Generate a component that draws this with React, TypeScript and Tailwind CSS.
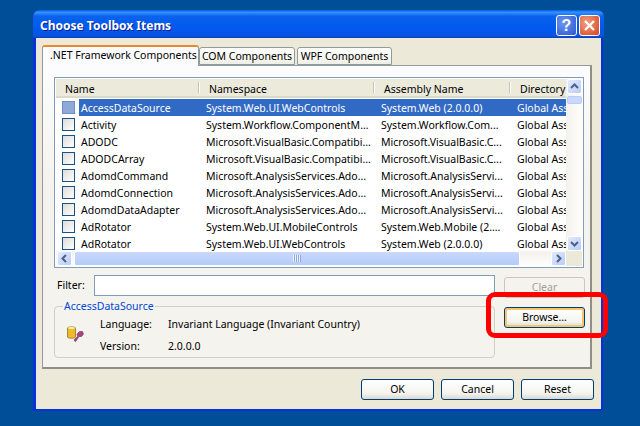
const rows = [
  ["AccessDataSource", "System.Web.UI.WebControls", "System.Web (2.0.0.0)"],
  ["Activity", "System.Workflow.ComponentM...", "System.Workflow.Com..."],
  ["ADODC", "Microsoft.VisualBasic.Compatibi...", "Microsoft.VisualBasic.C..."],
  ["ADODCArray", "Microsoft.VisualBasic.Compatibi...", "Microsoft.VisualBasic.C..."],
  ["AdomdCommand", "Microsoft.AnalysisServices.Ado...", "Microsoft.AnalysisServi..."],
  ["AdomdConnection", "Microsoft.AnalysisServices.Ado...", "Microsoft.AnalysisServi..."],
  ["AdomdDataAdapter", "Microsoft.AnalysisServices.Ado...", "Microsoft.AnalysisServi..."],
  ["AdRotator", "System.Web.UI.MobileControls", "System.Web.Mobile (2...."],
  ["AdRotator", "System.Web.UI.WebControls", "System.Web (2.0.0.0)"],
];

const xpButton =
  "flex items-center justify-center w-[73px] h-[21px] rounded-[3px] border border-[#003c74] bg-[linear-gradient(180deg,#ffffff,#f4f4f0_70%,#dcd8cf)] text-black";

function Arrow({ d }: { d: string }) {
  return (
    <div className="flex items-center justify-center w-[15px] h-[15px] rounded-[2px] border border-white bg-[linear-gradient(135deg,#e1eafe,#b9ccf8)]">
      <svg width="9" height="9" viewBox="0 0 9 9" fill="none" stroke="#4d6185" strokeWidth="2">
        <path d={d} />
      </svg>
    </div>
  );
}

function Header({ label, divider }: { label: string; divider?: boolean }) {
  return (
    <div className="relative pl-[9px] pt-[3px] flex items-center h-full overflow-hidden whitespace-nowrap">
      {label}
      {divider && <div className="absolute right-0 top-[3px] bottom-[3px] w-[2px] border-l border-[#c7c5b2] bg-white" />}
    </div>
  );
}

export default function App() {
  return (
    <div className="w-[640px] h-[426px] bg-[#004e98] pt-[10px] pl-[33px] overflow-hidden relative text-[10.5px] leading-[15px] text-black font-['Noto_Sans',sans-serif]">
      <div className="w-[570px] h-[401px] rounded-t-[7px] bg-[#0a4fe0] border-l-[3px] border-r-[2px] border-b-[2px] border-[#0831d9] flex flex-col">
        {/* title bar */}
        <div className="h-[28px] shrink-0 -mx-[3px] pl-[7px] pr-[4px] pt-[2px] rounded-t-[7px] flex items-center justify-between bg-[linear-gradient(180deg,#0058ee,#3593ff_8%,#0a62ee_22%,#0058ee_70%,#0a55e0_92%,#0a3fc0)]">
          <span className="font-bold text-[12px] text-white [text-shadow:1px_1px_#0f1c8c]">Choose Toolbox Items</span>
          <div className="flex gap-[2px]">
            <div className="w-[21px] h-[21px] rounded-[3px] border border-white bg-[radial-gradient(circle_at_35%_35%,#6d96f0,#2a57d0)] flex items-center justify-center text-white font-bold text-[16px] font-['Liberation_Sans',sans-serif]">?</div>
            <div className="w-[21px] h-[21px] rounded-[3px] border border-white bg-[radial-gradient(circle_at_35%_35%,#f0a080,#d8431c)] flex items-center justify-center">
              <svg width="13" height="13" viewBox="0 0 13 13" stroke="white" strokeWidth="2.4">
                <path d="M2 2L11 11M11 2L2 11" />
              </svg>
            </div>
          </div>
        </div>

        {/* dialog body */}
        <div className="flex-1 bg-[#ece9d8] pt-[7px] pl-[6px] pr-[9px]">
          {/* tabs */}
          <div className="flex items-end h-[20px] relative z-10">
            <div className="w-[157px] h-[21px] -mb-[1px] rounded-t-[3px] border border-b-0 border-[#919b9c] border-t-[#e68b2c] border-t-2 bg-[#fcfcfe] pl-[7px] pt-[1px] whitespace-nowrap">.NET Framework Components</div>
            <div className="w-[96px] h-[18px] rounded-t-[3px] border border-[#919b9c] bg-[linear-gradient(180deg,#fff,#f0efe6)] flex items-center justify-center whitespace-nowrap">COM Components</div>
            <div className="w-[95px] h-[18px] ml-[2px] rounded-t-[3px] border border-[#919b9c] bg-[linear-gradient(180deg,#fff,#f0efe6)] flex items-center justify-center whitespace-nowrap">WPF Components</div>
          </div>

          {/* tab page */}
          <div className="w-[550px] h-[304px] border border-[#919b9c] border-r-[#8f8f88] border-b-[#8f8f88] border-b-2 border-r-2 bg-[linear-gradient(180deg,#fcfcfe,#f4f3ee_40%)] pt-[11px] pl-[11px] pr-[7px]">
            {/* component list */}
            <div className="w-[530px] h-[191px] border border-[#7f9db9] bg-white p-[1px] flex">
              <div className="w-[510px] flex flex-col">
                <div className="grid grid-cols-[144px_175px_136px_55px] h-[19px] shrink-0 bg-[#ebeadb] border-b-[2px] border-[#dcd9c8] overflow-hidden">
                  <Header label="Name" divider />
                  <Header label="Namespace" divider />
                  <Header label="Assembly Name" divider />
                  <Header label="Directory" />
                </div>
                <div className="pt-[1px] flex-1 overflow-hidden">
                  {rows.map((row, i) => (
                    <div key={i} className="grid grid-cols-[144px_175px_136px_55px] h-[17px] items-center whitespace-nowrap overflow-hidden">
                      <div className="flex items-center pl-[6px]">
                        <div className={"w-[13px] h-[13px] mr-[4px] shrink-0 border border-[#1c5180] " + (i === 0 ? "bg-[#8fa9d8] border-[#6f8fc4]" : "bg-[linear-gradient(135deg,#dcdcd7,#ffffff)]")} />
                        <span className={"pl-[2px] pr-[2px] w-[121px] h-[17px] leading-[18px] " + (i === 0 ? "bg-[#316ac5] text-white" : "")}>{row[0]}</span>
                      </div>
                      <div className={"pl-[6px] h-[17px] leading-[18px] overflow-hidden " + (i === 0 ? "bg-[#316ac5] text-white" : "")}>{row[1]}</div>
                      <div className={"pl-[6px] h-[17px] leading-[18px] overflow-hidden " + (i === 0 ? "bg-[#316ac5] text-white" : "")}>{row[2]}</div>
                      <div className={"pl-[6px] h-[17px] leading-[18px] overflow-hidden " + (i === 0 ? "bg-[#316ac5] text-white" : "")}>Global Assembly</div>
                    </div>
                  ))}
                </div>
                {/* horizontal scrollbar */}
                <div className="h-[15px] shrink-0 flex items-center pl-[1px] bg-[linear-gradient(180deg,#f3f1ec,#fefefb)]">
                  <Arrow d="M6 1L2.5 4.5L6 8" />
                  <div className="ml-[2px] w-[446px] h-[15px] rounded-[2px] border border-white bg-[linear-gradient(180deg,#c9d8fc,#b6cbf8)] flex items-center justify-center">
                    <div className="w-[8px] h-[7px] bg-[repeating-linear-gradient(90deg,#eef3fe_0_1px,#8ca8e6_1px_2px)]" />
                  </div>
                  <div className="flex-1" />
                  <Arrow d="M3 1L6.5 4.5L3 8" />
                </div>
              </div>
              {/* vertical scrollbar */}
              <div className="flex-1 flex flex-col">
                <div className="h-[172px] flex flex-col items-center bg-[linear-gradient(90deg,#f3f1ec,#fefefb)]">
                  <Arrow d="M1 6L4.5 2.5L8 6" />
                  <div className="w-[15px] h-[8px] mt-[2px] rounded-[2px] border border-[#b9ccf8] bg-[#c9d8fc]" />
                  <div className="flex-1" />
                  <Arrow d="M1 3L4.5 6.5L8 3" />
                </div>
                <div className="flex-1 bg-[#ece9d8]" />
              </div>
            </div>

            {/* filter row */}
            <div className="flex items-start mt-[7px] gap-[9px]">
              <div className="w-[441px] flex flex-col">
                <div className="flex items-center h-[21px]">
                  <span className="pl-[3px] w-[40px]">Filter:</span>
                  <div className="w-[401px] h-[21px] border border-[#7f9db9] bg-white" />
                </div>
                {/* details group */}
                <fieldset className="mt-[4px] h-[58px] border border-[#d0d0bf] rounded-[4px] pl-[12px]">
                  <legend className="ml-[-4px] px-[1px] text-[#0046d5] leading-[13px]">AccessDataSource</legend>
                  <div className="flex items-center pt-[4px]">
                    <svg width="17" height="16" viewBox="0 0 17 16" className="shrink-0 mb-[3px]">
                      <path d="M0.5 2C0.5 0.6 8.5 0.6 8.5 2V11C8.5 12.6 0.5 12.6 0.5 11Z" fill="#efb92a" stroke="#9c8a3c" />
                      <ellipse cx="4.5" cy="2" rx="3.5" ry="1.1" fill="#fbeea4" />
                      <path d="M8 15.5L7 14L10.5 10.5L10 8L12.5 5.5L15.5 5.5L16.5 8L14.5 10.5L12 10.5L9 15Z" fill="#a5467f" stroke="#7d2b5e" strokeWidth="0.6" />
                    </svg>
                    <div className="ml-[16px] grid grid-cols-[68px_auto] gap-y-[7px]">
                      <span>Language:</span>
                      <span>Invariant Language (Invariant Country)</span>
                      <span>Version:</span>
                      <span>2.0.0.0</span>
                    </div>
                  </div>
                </fieldset>
              </div>
              <div className="flex flex-col gap-[9px] mt-[2px]">
                <div className="flex items-center justify-center w-[81px] h-[21px] rounded-[3px] border border-[#c9c7ba] bg-[#f4f3ee] text-[#a1a192]">Clear</div>
                <div className="flex items-center justify-center w-[81px] h-[21px] rounded-[3px] border border-[#003c74] bg-[linear-gradient(180deg,#fff,#f4f4f0_70%,#dcd8cf)] shadow-[inset_0_0_0_2px_#f8c66a]">Browse...</div>
              </div>
            </div>
          </div>

          {/* dialog buttons */}
          <div className="flex mt-[10px] pl-[319px] gap-[7px] w-[560px]">
            <div className={xpButton}>OK</div>
            <div className={xpButton}>Cancel</div>
            <div className={xpButton}>Reset</div>
          </div>
        </div>
      </div>

      {/* red highlight drawn over the screenshot */}
      <div className="absolute left-[486px] top-[292px] w-[122px] h-[46px] rounded-[9px] border-[5px] border-[#ff0000]" />
    </div>
  );
}
